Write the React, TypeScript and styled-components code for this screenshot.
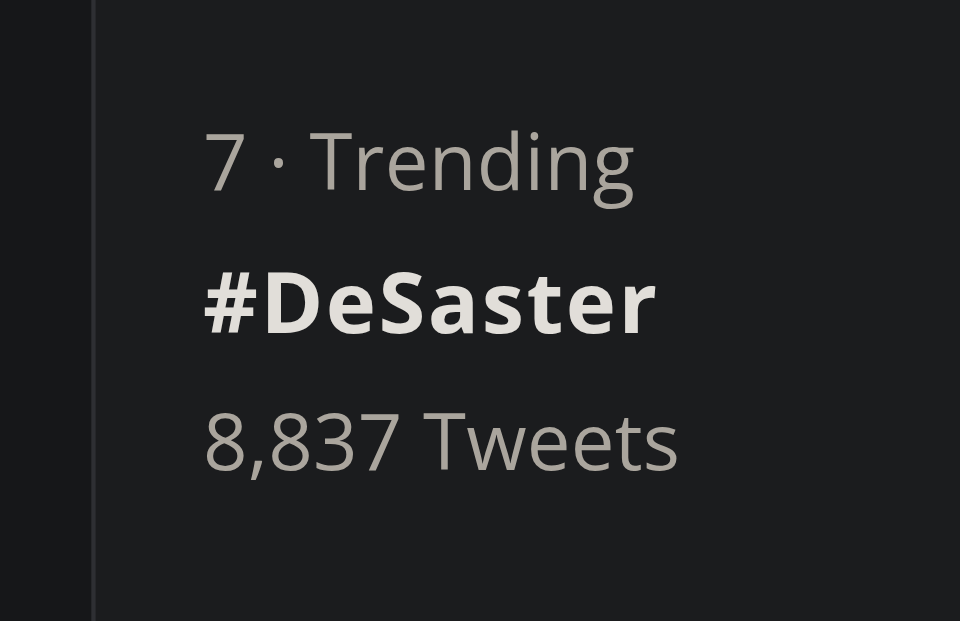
import React from "react";
import styled, { createGlobalStyle } from "styled-components";

const Global = createGlobalStyle`
  html, body { margin: 0; padding: 0; background: #161719; }
  body { width: 960px; height: 621px; overflow: hidden; }
`;

const Page = styled.div`
  display: flex;
  width: 960px;
  height: 621px;
`;

const Side = styled.div`
  width: 91px;
  background: #161719;
`;

const Divider = styled.div`
  width: 5px;
  background: #2e2f33;
  box-shadow: inset 1px 0 0 #26272a, inset -1px 0 0 #26272a;
`;

const Panel = styled.div`
  flex: 1;
  background: #1b1c1e;
  padding: 90px 0 0 107px;
  display: flex;
  flex-direction: column;
  font-family: "Open Sans", "Noto Sans", sans-serif;
`;

const Line = styled.div<{ $bold?: boolean }>`
  font-size: ${(p) => (p.$bold ? "85px" : "78px")};
  line-height: 140px;
  height: 140px;
  white-space: nowrap;
  font-weight: ${(p) => (p.$bold ? 700 : 400)};
  color: ${(p) => (p.$bold ? "#e1ded9" : "#aaa59d")};
  letter-spacing: ${(p) => (p.$bold ? "2.5px" : "0.2px")};
`;

export default function App() {
  return (
    <Page>
      <Global />
      <Side />
      <Divider />
      <Panel>
        <Line>7 · Trending</Line>
        <Line $bold>#DeSaster</Line>
        <Line>8,837 Tweets</Line>
      </Panel>
    </Page>
  );
}
